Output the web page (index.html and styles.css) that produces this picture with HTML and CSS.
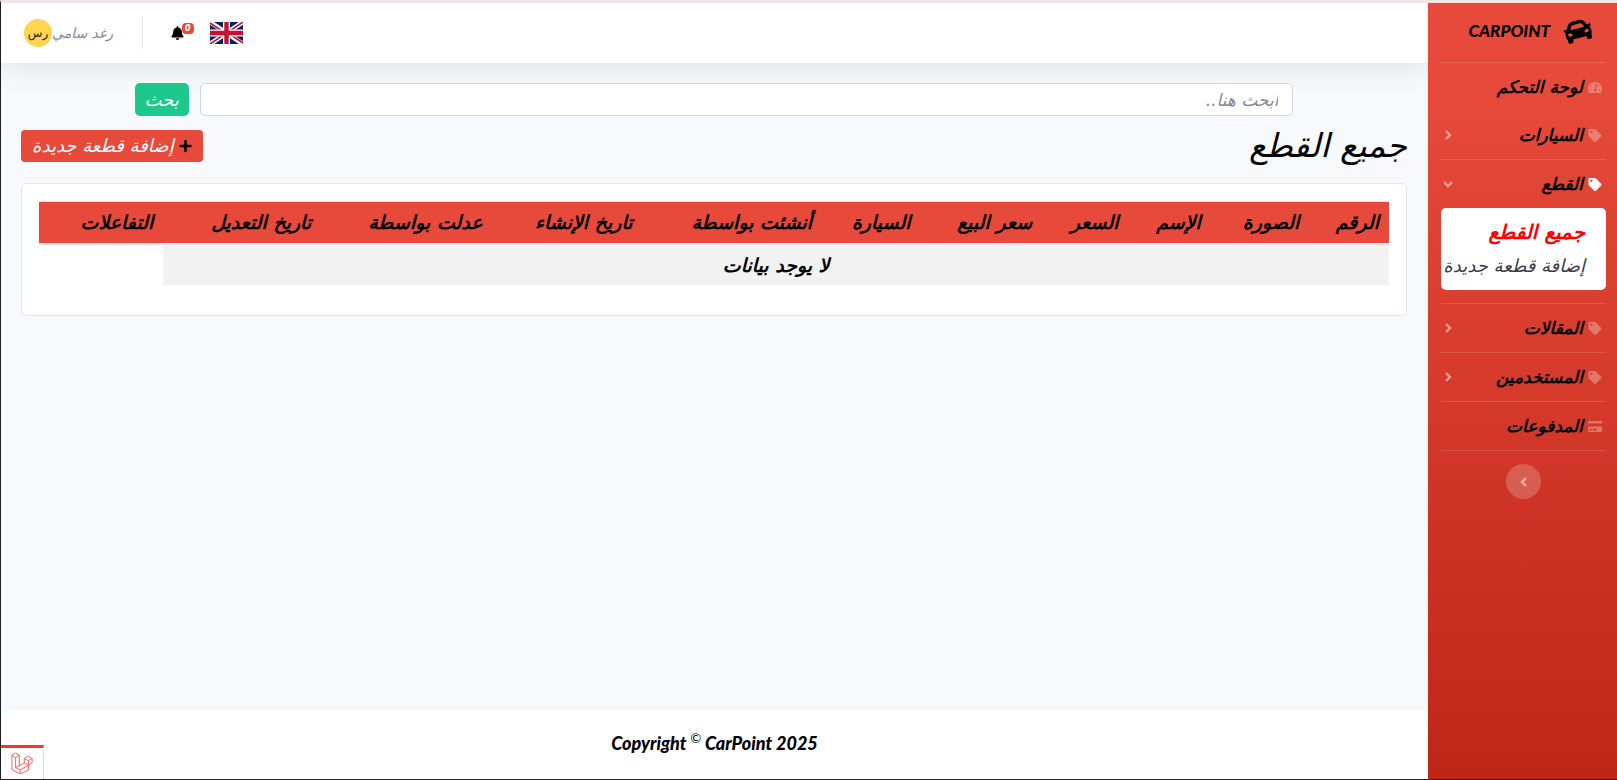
FILE: index.html
```html
<!DOCTYPE html>
<html lang="ar" dir="rtl">
<head>
<meta charset="utf-8">
<title>CarPoint</title>
<link rel="stylesheet" href="styles.css">
</head>
<body>
<svg class="sprite" aria-hidden="true">
  <symbol id="tag" viewBox="0 0 512 512"><path d="M0 252.118V48C0 21.49 21.49 0 48 0h204.118a48 48 0 0 1 33.941 14.059l211.882 211.882c18.745 18.745 18.745 49.137 0 67.882L293.823 497.941c-18.745 18.745-49.137 18.745-67.882 0L14.059 286.059A48 48 0 0 1 0 252.118zM112 64c-26.51 0-48 21.49-48 48s21.49 48 48 48 48-21.49 48-48-21.49-48-48-48z"/></symbol>
  <symbol id="gauge" viewBox="0 0 576 512"><path d="M288 32C128.94 32 0 160.94 0 320c0 52.8 14.25 102.26 39.06 144.8 5.61 9.62 16.3 15.2 27.44 15.2h443c11.14 0 21.83-5.58 27.44-15.2C561.75 422.26 576 372.8 576 320c0-159.06-128.94-288-288-288zm0 64c14.71 0 26.58 10.13 30.32 23.65-1.11 2.26-2.64 4.23-3.45 6.67l-9.22 27.67c-5.13 3.49-10.97 6.01-17.64 6.01-17.67 0-32-14.33-32-32S270.33 96 288 96zM96 384c-17.67 0-32-14.33-32-32s14.33-32 32-32 32 14.33 32 32-14.33 32-32 32zm48-160c-17.67 0-32-14.33-32-32s14.33-32 32-32 32 14.33 32 32-14.33 32-32 32zm246.77-72.41l-61.33 184C343.13 347.33 352 364.54 352 384c0 11.72-3.38 22.55-8.88 32H232.88c-5.5-9.45-8.88-20.28-8.88-32 0-33.94 26.5-61.43 59.9-63.59l61.34-184.01c4.17-12.56 17.73-19.45 30.36-15.17 12.57 4.19 19.35 17.79 15.17 30.36zm14.66 57.2l15.52-46.55c3.47-1.29 7.13-2.23 11.05-2.23 17.67 0 32 14.33 32 32s-14.33 32-32 32c-11.38-.01-20.89-6.28-26.57-15.22zM480 384c-17.67 0-32-14.33-32-32s14.33-32 32-32 32 14.33 32 32-14.33 32-32 32z"/></symbol>
  <symbol id="card" viewBox="0 0 576 512"><path d="M0 432c0 26.5 21.5 48 48 48h480c26.5 0 48-21.5 48-48V256H0v176zm192-68c0-6.6 5.4-12 12-12h136c6.6 0 12 5.4 12 12v40c0 6.6-5.4 12-12 12H204c-6.6 0-12-5.4-12-12v-40zm-128 0c0-6.6 5.4-12 12-12h72c6.6 0 12 5.4 12 12v40c0 6.6-5.4 12-12 12H76c-6.6 0-12-5.4-12-12v-40zM576 80v48H0V80c0-26.5 21.5-48 48-48h480c26.5 0 48 21.5 48 48z"/></symbol>
  <symbol id="right" viewBox="0 0 8 12"><path d="M2 2l4 4-4 4" fill="none" stroke="currentColor" stroke-width="2.4"/></symbol>
  <symbol id="left" viewBox="0 0 8 12"><path d="M6 2L2 6l4 4" fill="none" stroke="currentColor" stroke-width="2.4"/></symbol>
  <symbol id="down" viewBox="0 0 10 12"><path d="M1 4l4 4 4-4" fill="none" stroke="currentColor" stroke-width="2.4"/></symbol>
</svg>

<div class="page">
  <nav class="sidebar">
    <a class="brand" href="#">
      <svg class="brand-icon" viewBox="0 0 512 512" aria-hidden="true"><path d="M499.99 176h-59.87l-16.64-41.6C406.38 91.63 365.57 64 319.5 64h-127c-46.06 0-86.88 27.63-103.99 70.4L71.87 176H12.01C4.2 176-1.53 183.34.37 190.91l6 24C7.7 220.25 12.5 224 18.01 224h20.07C24.65 235.73 16 252.78 16 272v48c0 16.12 6.16 30.67 16 41.93V416c0 17.67 14.33 32 32 32h32c17.67 0 32-14.33 32-32v-32h256v32c0 17.67 14.33 32 32 32h32c17.67 0 32-14.33 32-32v-54.07c9.84-11.25 16-25.8 16-41.93v-48c0-19.22-8.65-36.27-22.07-48H494c5.51 0 10.31-3.75 11.64-9.09l6-24c1.89-7.57-3.84-14.91-11.65-14.91zm-352.06-17.83c7.29-18.22 24.94-30.17 44.57-30.17h127c19.63 0 37.28 11.95 44.57 30.17L384 208H128l19.93-49.83zM96 319.8c-19.2 0-32-12.76-32-31.9S76.8 256 96 256s48 28.71 48 47.85-28.8 15.95-48 15.95zm320 0c-19.2 0-48 3.19-48-15.95S396.8 256 416 256s32 12.76 32 31.9-12.8 31.9-32 31.9z"/></svg>
      <span>CARPOINT</span>
    </a>
    <ul class="menu">
      <li><a class="nav-link" href="#"><svg class="icon"><use href="#gauge"/></svg><span>لوحة التحكم</span></a></li>
      <li class="ruled"><a class="nav-link" href="#"><svg class="icon"><use href="#tag"/></svg><span>السيارات</span><svg class="arrow"><use href="#right"/></svg></a></li>
      <li class="ruled open">
        <a class="nav-link active" href="#"><svg class="icon"><use href="#tag"/></svg><span>القطع</span><svg class="arrow"><use href="#down"/></svg></a>
        <div class="submenu">
          <a class="current" href="#">جميع القطع</a>
          <a href="#">إضافة قطعة جديدة</a>
        </div>
      </li>
      <li class="ruled"><a class="nav-link" href="#"><svg class="icon"><use href="#tag"/></svg><span>المقالات</span><svg class="arrow"><use href="#right"/></svg></a></li>
      <li class="ruled"><a class="nav-link" href="#"><svg class="icon"><use href="#tag"/></svg><span>المستخدمين</span><svg class="arrow"><use href="#right"/></svg></a></li>
      <li class="ruled"><a class="nav-link" href="#"><svg class="icon"><use href="#card"/></svg><span>المدفوعات</span></a></li>
    </ul>
    <button class="toggle" aria-label="طي القائمة"><svg><use href="#left"/></svg></button>
  </nav>

  <div class="content">
    <header class="topbar">
      <a class="flag" href="#" aria-label="English">
        <svg viewBox="0 0 33 22">
          <path fill="#012169" d="M0 0h33v22H0z"/>
          <path stroke="#fff" stroke-width="4.6" d="M0 0l33 22M33 0L0 22"/>
          <path stroke="#c8102e" stroke-width="1.6" d="M0 1l15 10M33 21L18 11M33 0L17 10.600M0 22l16-10.600"/>
          <path stroke="#fff" stroke-width="7" d="M16.500 0v22M0 11h33"/>
          <path stroke="#c8102e" stroke-width="4.400" d="M16.500 0v22M0 11h33"/>
        </svg>
      </a>
      <a class="alerts" href="#" aria-label="الإشعارات">
        <svg viewBox="0 0 448 512"><path d="M224 512c35.32 0 63.97-28.65 63.97-64H160.03c0 35.35 28.65 64 63.97 64zm215.39-149.71c-19.32-20.76-55.47-51.99-55.47-154.29 0-77.7-54.48-139.9-127.94-155.16V32c0-17.67-14.32-32-31.98-32s-31.98 14.33-31.98 32v20.84C118.56 68.1 64.08 130.3 64.08 208c0 102.3-36.15 133.53-55.47 154.29-6 6.45-8.66 14.16-8.61 21.71.11 16.4 12.98 32 32.1 32h383.8c19.12 0 32-15.6 32.1-32 .05-7.55-2.61-15.27-8.61-21.71z"/></svg>
        <span class="badge">0</span>
      </a>
      <span class="separator"></span>
      <a class="user" href="#"><span>رغد سامي</span><span class="avatar">رس</span></a>
    </header>

    <main>
      <form class="search">
        <input type="search" aria-label="بحث" placeholder="ابحث هنا..">
        <button type="button">بحث</button>
      </form>
      <div class="heading">
        <h1>جميع القطع</h1>
        <a class="add" href="#"><svg viewBox="0 0 448 512" aria-hidden="true"><path d="M416 208H272V64c0-17.67-14.33-32-32-32h-32c-17.67 0-32 14.33-32 32v144H32c-17.67 0-32 14.33-32 32v32c0 17.67 14.33 32 32 32h144v144c0 17.67 14.33 32 32 32h32c17.67 0 32-14.33 32-32V304h144c17.67 0 32-14.33 32-32v-32c0-17.67-14.33-32-32-32z"/></svg><span>إضافة قطعة جديدة</span></a>
      </div>
      <section class="panel">
        <table>
          <colgroup><col class="c-num"><col class="c-img"><col class="c-name"><col class="c-price"><col class="c-sale"><col class="c-car"><col class="c-by"><col class="c-created"><col class="c-editor"><col class="c-edited"><col></colgroup>
          <thead>
            <tr><th>الرقم</th><th>الصورة</th><th>الإسم</th><th>السعر</th><th>سعر البيع</th><th>السيارة</th><th>أنشئت بواسطة</th><th>تاريخ الإنشاء</th><th>عدلت بواسطة</th><th>تاريخ التعديل</th><th>التفاعلات</th></tr>
          </thead>
          <tbody>
            <tr><td class="empty" colspan="10">لا يوجد بيانات</td></tr>
          </tbody>
        </table>
      </section>
    </main>

    <footer>Copyright <sup>©</sup> CarPoint 2025</footer>
  </div>
</div>

<button class="debug" aria-label="Debugbar">
  <svg viewBox="0 0 24 24" fill="none" stroke="#f4483a" stroke-width="0.9" stroke-linejoin="round"><path d="M1 3.500L5 1l4 2.500V15l5.500-3V7L19 4.500 23 7v5l-4 2.500v5L10 24l-9-5zM1 3.500L5 6l4-2.500M5 6v11l5 2.500 9-5M10 19.500V24M5 17l4-2M14.500 7L19 9.500 23 7M19 9.500v5M14.500 12l4.500 2.500"/></svg>
</button>
</body>
</html>
```
FILE: styles.css
```css
* { box-sizing: border-box; }
html { height: 100%; }
body {
  margin: 0;
  min-height: 100%;
  display: flex;
  border-left: 1px solid #1d1d22;
  border-top: 3px solid #efe6e2;
  border-bottom: 1px solid #2a2224;
  background: #f8f9fc;
  font: italic 18px/24px "DejaVu Sans", sans-serif;
  color: #000;
}
a { color: inherit; text-decoration: none; }
button, input { font: inherit; }
.sprite { display: none; }
.page { display: flex; flex: 1; }

.sidebar {
  width: 189px;
  flex: none;
  padding: 0 11px 0 13px;
  background: linear-gradient(180deg, #e74a3b 10%, #be2617 100%);
  z-index: 1;
}
.brand {
  display: flex;
  align-items: center;
  gap: 14px;
  height: 60px;
  padding: 0 14px 3px 0;
  border-bottom: 1px solid rgba(255, 255, 255, 0.15);
  font: italic 900 17px/24px Lato, sans-serif;
}
.brand-icon { width: 28px; height: 28px; transform: rotate(-15deg); }
.menu { margin: 0; padding: 0; list-style: none; }
.ruled { border-bottom: 1px solid rgba(255, 255, 255, 0.15); }
.open { padding-bottom: 13px; }
.nav-link {
  display: flex;
  align-items: center;
  gap: 5px;
  height: 48px;
  padding: 0 4px 0 2px;
  font-size: 17px;
  font-weight: bold;
}
.icon { width: 14px; height: 13px; fill: rgba(255, 255, 255, 0.3); }
.active .icon { fill: #fff; }
.arrow { width: 10px; height: 12px; margin-right: auto; color: rgba(255, 255, 255, 0.5); }
.submenu {
  display: flex;
  flex-direction: column;
  padding: 7px 0;
  border-radius: 5px;
  background: #fff;
}
.submenu a { padding: 5px 21px 5px 0; white-space: nowrap; color: #3a3b45; }
.submenu .current { font-size: 20px; font-weight: bold; color: #f00; }
.toggle {
  display: flex;
  align-items: center;
  justify-content: center;
  width: 35px;
  height: 35px;
  margin: 13px auto;
  padding: 0;
  border: 0;
  border-radius: 50%;
  background: rgba(255, 255, 255, 0.2);
  color: rgba(255, 255, 255, 0.5);
}
.toggle svg { width: 8px; height: 12px; }

.content { flex: 1; display: flex; flex-direction: column; min-width: 0; }
.topbar {
  display: flex;
  align-items: center;
  justify-content: flex-end;
  height: 60px;
  padding: 0 0 1px 23px;
  background: #fff;
  box-shadow: 0 2px 28px rgba(58, 59, 69, 0.15);
}
.flag svg { display: block; width: 33px; height: 22px; }
.alerts { position: relative; margin: 0 26px 0 28px; }
.alerts svg { display: block; width: 13px; height: 14px; }
.badge {
  position: absolute;
  top: -3px;
  left: 11px;
  padding: 0 3px;
  border-radius: 4px;
  background: #e74a3b;
  color: #fff;
  font: italic bold 8px/11px "DejaVu Sans", sans-serif;
}
.separator { width: 1px; height: 33px; background: #e3e6f0; }
.user { display: flex; align-items: center; margin-right: 29px; font-size: 14px; color: #858796; }
.avatar {
  display: flex;
  align-items: center;
  justify-content: center;
  width: 28px;
  height: 28px;
  border-radius: 50%;
  background: #ffd54f;
  color: #222;
  font-size: 12px;
  font-style: normal;
}

main { flex: 1; padding: 20px 21px 20px 20px; }
.search { display: flex; gap: 11px; padding: 0 8.200%; }
.search input {
  flex: 1;
  min-width: 0;
  height: 33px;
  padding: 0 14px;
  border: 1px solid #d1d3e2;
  border-radius: 5px;
  background: #fff;
  font-size: 17px;
}
.search input::placeholder { color: #858796; }
.search button {
  width: 54px;
  padding: 0;
  border: 0;
  border-radius: 5px;
  background: #1cc88a;
  color: #fff;
}
.heading { display: flex; align-items: center; justify-content: space-between; margin: 10px 0 17px; }
h1 { margin: 0; font-size: 33px; line-height: 40px; font-weight: normal; }
.add {
  display: flex;
  align-items: center;
  gap: 5px;
  padding: 4px 11px;
  border-radius: 4px;
  background: #e74a3b;
  color: #fff;
}
.add svg { width: 13px; height: 14px; fill: #000; }
.panel {
  padding: 17px 17px 30px;
  border: 1px solid #e3e6f0;
  border-radius: 5px;
  background: #fff;
}
table { width: 100%; table-layout: fixed; border-collapse: collapse; font-size: 19px; font-weight: bold; }
th { padding: 8px 10px 9px; text-align: right; white-space: nowrap; background: #e74a3b; border-top: 1px solid #e3e6f0; }
thead { border-bottom: 2px solid #e3e6f0; }
.empty { padding: 8px 10px; text-align: center; background: #f2f2f2; }
.c-num { width: 5.900%; }
.c-img { width: 7.300%; }
.c-name { width: 6.100%; }
.c-price { width: 6.400%; }
.c-sale { width: 9%; }
.c-car { width: 7.300%; }
.c-by { width: 13.300%; }
.c-created { width: 11.100%; }
.c-editor { width: 12.700%; }
.c-edited { width: 11.700%; }

footer {
  padding: 20px 0 24px;
  background: #fff;
  text-align: center;
  direction: ltr;
  font: italic 900 18px/24px Lato, sans-serif;
}
footer sup { font-size: 13px; font-weight: normal; line-height: 0; }

.debug {
  position: fixed;
  left: 1px;
  bottom: 1px;
  width: 43px;
  height: 34px;
  padding: 4px 0 0;
  border: 0;
  border-top: 3px solid #f4382a;
  border-right: 1px solid #ddd;
  background: #fff;
}
.debug svg { width: 22px; height: 22px; }
```
